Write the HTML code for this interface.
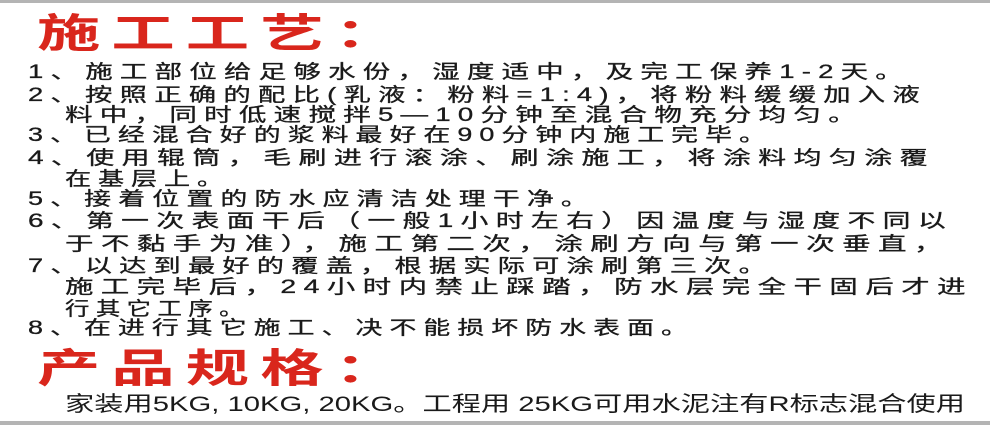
<!DOCTYPE html>
<html><head><meta charset="utf-8"><style>
html,body{margin:0;padding:0}
body{width:990px;height:425px;background:#fff;position:relative;overflow:hidden;font-family:"Liberation Sans","Noto Sans CJK SC",sans-serif}
.bt{position:absolute;left:0;top:0;width:990px;height:3px;background:#b4b4b4}
.bb{position:absolute;left:0;top:421px;width:990px;height:4px;background:#b4b4b4}
.l{position:absolute;height:24px;line-height:24px;white-space:nowrap;color:#1a1a1a;font-size:19px;letter-spacing:5px}
.l span{display:inline-block;transform-origin:0 50%;-webkit-text-stroke:0.3px #1a1a1a}
.t{position:absolute;height:44px;line-height:44px;white-space:nowrap;color:#d9261c;font-size:40px;font-weight:bold;letter-spacing:7px}
.t span{display:inline-block;transform-origin:0 50%}
</style></head><body>
<div class="bt"></div><div class="bb"></div>
<div class="t" style="left:37px;top:12px;width:372px"><span>施工工艺：</span></div>
<div class="l" style="left:28px;top:61px;width:882px"><span>1、施工部位给足够水份，湿度适中，及完工保养1-2天。</span></div>
<div class="l" style="left:28px;top:84px;width:899px"><span>2、按照正确的配比(乳液：粉料=1:4)，将粉料缓缓加入液</span></div>
<div class="l" style="left:65px;top:104px;width:798px"><span>料中，同时低速搅拌5—10分钟至混合物充分均匀。</span></div>
<div class="l" style="left:28px;top:124px;width:745px"><span>3、已经混合好的浆料最好在90分钟内施工完毕。</span></div>
<div class="l" style="left:28px;top:147px;width:907px"><span>4、使用辊筒，毛刷进行滚涂、刷涂施工，将涂料均匀涂覆</span></div>
<div class="l" style="left:65px;top:168px;width:165px"><span>在基层上。</span></div>
<div class="l" style="left:28px;top:188px;width:567px"><span>5、接着位置的防水应清洁处理干净。</span></div>
<div class="l" style="left:28px;top:210px;width:925px"><span>6、第一次表面干后（一般1小时左右）因温度与湿度不同以</span></div>
<div class="l" style="left:65px;top:233px;width:885px"><span>于不黏手为准），施工第二次，涂刷方向与第一次垂直，</span></div>
<div class="l" style="left:28px;top:255px;width:745px"><span>7、以达到最好的覆盖，根据实际可涂刷第三次。</span></div>
<div class="l" style="left:65px;top:276px;width:908px"><span>施工完毕后，24小时内禁止踩踏，防水层完全干固后才进</span></div>
<div class="l" style="left:65px;top:298px;width:185px"><span>行其它工序。</span></div>
<div class="l" style="left:28px;top:317px;width:667px"><span>8、在进行其它施工、决不能损坏防水表面。</span></div>
<div class="t" style="left:37px;top:347px;width:372px"><span>产品规格：</span></div>
<div class="l" style="left:65px;top:393px;width:900px;font-size:21px;letter-spacing:0"><span style="-webkit-text-stroke:0">家装用5KG, 10KG, 20KG。工程用 25KG可用水泥注有R标志混合使用</span></div>
<script>
document.querySelectorAll('.l,.t').forEach(function(d){var s=d.firstElementChild;var w=s.getBoundingClientRect().width;var W=parseFloat(d.style.width);if(w>0)s.style.transform='scaleX('+(W/w)+')';});
</script>
</body></html>
